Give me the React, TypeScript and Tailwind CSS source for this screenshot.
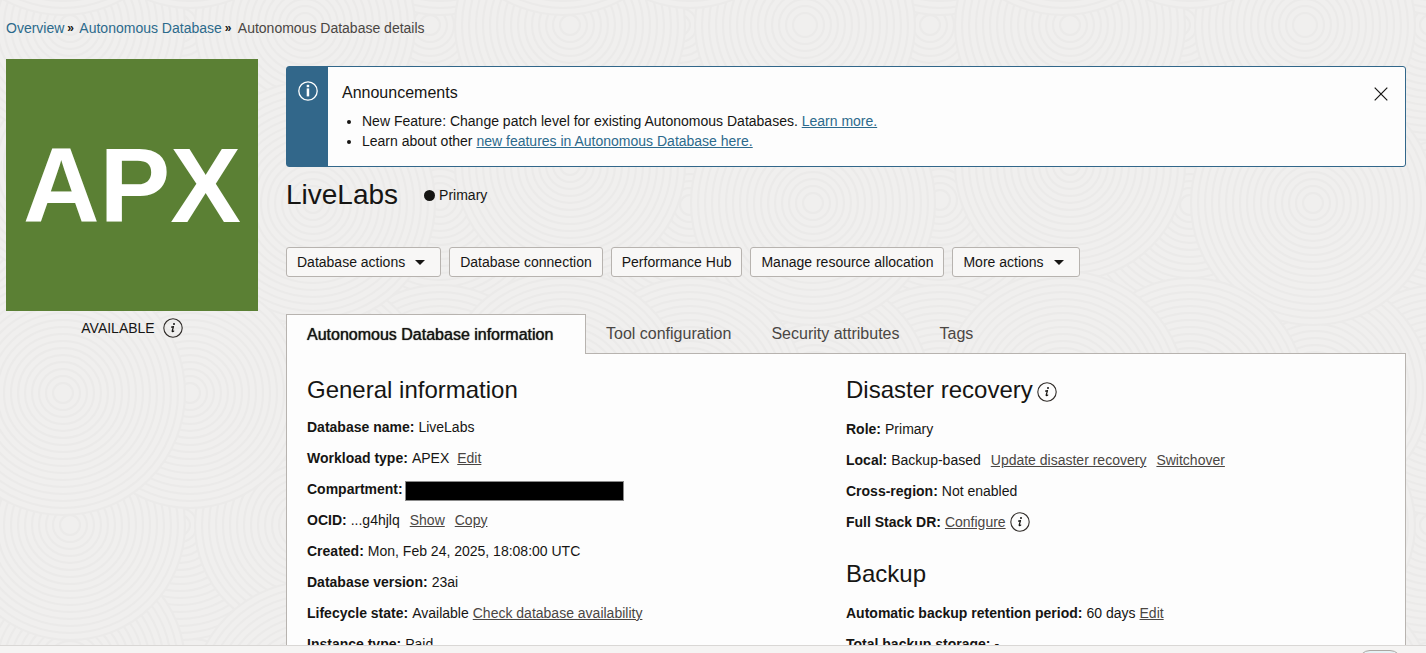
import type { ReactNode } from "react";

const TILE = 500;
const RING_SPACING = 7;

// Drawn in order, so later discs overlap earlier ones.
const RINGS: { x: number; y: number; r: number }[] = [
  { x: 190, y: 205, r: 115 },
  { x: 440, y: 200, r: 115 },
  { x: 430, y: 25, r: 115 },
  { x: 180, y: 25, r: 115 },
  { x: 440, y: 400, r: 115 },
  { x: 315, y: 390, r: 115 },
  { x: 70, y: 165, r: 115 },
  { x: 70, y: 25, r: 115 },
  { x: 305, y: 25, r: 110 },
  { x: 313, y: 203, r: 122 },
  { x: 190, y: 393, r: 115 },
  { x: 63, y: 393, r: 122 },
];

const WRAPS = [-TILE, 0, TILE];

function ringRadii(outer: number) {
  return Array.from({ length: Math.floor(outer / RING_SPACING) }, (_, i) => outer - i * RING_SPACING);
}

function RingTexture() {
  return (
    <svg className="absolute inset-0 h-full w-full" aria-hidden="true">
      <defs>
        <pattern id="rings" width={TILE} height={TILE} patternUnits="userSpaceOnUse">
          {RINGS.map(({ x, y, r }) =>
            WRAPS.flatMap((dx) =>
              WRAPS.map((dy) => (
                <g key={`${x}:${y}:${dx}:${dy}`} stroke="#ebeae9" strokeWidth="2" fill="none">
                  <circle cx={x + dx} cy={y + dy} r={r} fill="#f0efee" stroke="none" />
                  {ringRadii(r).map((radius) => (
                    <circle key={radius} cx={x + dx} cy={y + dy} r={radius} />
                  ))}
                </g>
              )),
            ),
          )}
        </pattern>
      </defs>
      <rect width="100%" height="100%" fill="url(#rings)" />
    </svg>
  );
}

function InfoIcon() {
  return (
    <svg className="h-5 w-5 shrink-0" viewBox="0 0 20 20" fill="none" aria-hidden="true">
      <circle cx="10" cy="10" r="9.2" stroke="#312d2a" strokeWidth="1.1" />
      <circle cx="11" cy="6.1" r="1" fill="#161513" />
      <path d="M8.1 9.2c1-.1 1.7-.3 2.4-.6L9.2 13c-.2.9.5 1 1.9-.4" stroke="#161513" strokeWidth="1.2" strokeLinejoin="round" />
    </svg>
  );
}

function InfoButton({ label }: { label: string }) {
  return (
    <button type="button" aria-label={label} className="flex h-5 w-5 items-center justify-center">
      <InfoIcon />
    </button>
  );
}

function ActionButton({ children, menu = false }: { children: ReactNode; menu?: boolean }) {
  return (
    <button
      type="button"
      className={`flex h-[30px] items-center gap-2.5 rounded-[3px] border border-[#b7b3af] bg-[#f8f7f6] pl-2.5 ${menu ? "pr-[15px]" : "pr-2.5"}`}
    >
      {children}
      {menu && (
        <svg className="h-[5px] w-2.5" viewBox="0 0 10 5" aria-hidden="true">
          <path d="M0 0h10L5 5z" fill="#161513" />
        </svg>
      )}
    </button>
  );
}

function TextLink({ children }: { children: ReactNode }) {
  return (
    <a href="#" className="text-[#4a4643] underline underline-offset-1">
      {children}
    </a>
  );
}

function Field({ label, children }: { label: string; children?: ReactNode }) {
  return (
    <div className="flex h-[31px] items-center gap-1 whitespace-nowrap">
      <dt className="font-bold">{label}:</dt>
      <dd className="flex items-center">{children}</dd>
    </div>
  );
}

export default function App() {
  return (
    <div className="flex h-screen flex-col overflow-hidden bg-[#f0efee] font-['Helvetica_Neue','Liberation_Sans',Arial,sans-serif] text-sm leading-5 text-[#161513]">
      <main className="relative min-h-0 flex-1 overflow-hidden">
        <RingTexture />
        <div className="relative pl-1.5 pr-5">
          <nav aria-label="Breadcrumb" className="flex items-center pt-[18px]">
            <a href="#" className="text-[#2c6a8c]">Overview</a>
            <span className="w-[15px] pl-[3px] text-xs font-bold">»</span>
            <a href="#" className="text-[#2c6a8c]">Autonomous Database</a>
            <span className="w-4 pl-[3px] text-xs font-bold">»</span>
            <span className="text-[#4a4643]">Autonomous Database details</span>
          </nav>

          <div className="flex gap-7 pt-[21px]">
            <aside className="w-[252px] shrink-0">
              <div className="flex h-[252px] items-center justify-center bg-[#5b8034] text-[106px] font-bold leading-none text-white">
                APX
              </div>
              <div className="flex items-center justify-center gap-2 pt-[7px]">
                AVAILABLE
                <InfoButton label="About the available state" />
              </div>
            </aside>

            <div className="min-w-0 flex-1 pt-[7px]">
              <section className="flex rounded-[3px] border border-[#32678a] bg-[#fdfdfd]">
                <div className="flex w-[41px] shrink-0 justify-center bg-[#32678a] pt-3.5">
                  <svg className="h-5 w-5" viewBox="0 0 20 20" fill="none" aria-hidden="true">
                    <circle cx="10" cy="10" r="9.2" stroke="#fff" strokeWidth="1.3" />
                    <rect x="8.7" y="3.8" width="2.5" height="2.4" fill="#fff" />
                    <path d="M8.7 7.4h2.5v8H8.7z" fill="#fff" />
                  </svg>
                </div>
                <div className="flex-1 pb-[15px] pl-3.5 pt-4">
                  <h2 className="text-base leading-5">Announcements</h2>
                  <ul className="list-disc pl-5 pt-2">
                    <li>
                      New Feature: Change patch level for existing Autonomous Databases.{" "}
                      <a href="#" className="text-[#2c6a8c] underline underline-offset-1">Learn more.</a>
                    </li>
                    <li>
                      Learn about other{" "}
                      <a href="#" className="text-[#2c6a8c] underline underline-offset-1">new features in Autonomous Database here.</a>
                    </li>
                  </ul>
                </div>
                <button type="button" aria-label="Close announcements" className="mr-4 mt-[19px] h-4 w-4">
                  <svg className="h-4 w-4" viewBox="0 0 16 16" aria-hidden="true">
                    <path d="m1.7 1.7 12.6 12.6M14.3 1.7 1.7 14.3" stroke="#161513" strokeWidth="1.2" />
                  </svg>
                </button>
              </section>

              <div className="flex h-14 items-center gap-[26px]">
                <h1 className="text-[28px] leading-9">LiveLabs</h1>
                <span className="flex items-center gap-1">
                  <span className="h-[11px] w-[11px] rounded-full bg-[#161513]" />
                  Primary
                </span>
              </div>

              <div className="flex gap-2 pt-6">
                <ActionButton menu>Database actions</ActionButton>
                <ActionButton>Database connection</ActionButton>
                <ActionButton>Performance Hub</ActionButton>
                <ActionButton>Manage resource allocation</ActionButton>
                <ActionButton menu>More actions</ActionButton>
              </div>

              <div role="tablist" className="relative z-10 flex pt-[37px] text-base leading-5 text-[#4a4643]">
                <button role="tab" aria-selected="true" type="button" className="-mb-px h-10 w-[300px] border border-b-0 border-[#b7b3af] bg-[#fdfdfd] pl-5 text-left text-[#161513] [text-shadow:0_0_1px_#161513]">
                  Autonomous Database information
                </button>
                <button role="tab" aria-selected="false" type="button" className="h-[39px] px-5">Tool configuration</button>
                <button role="tab" aria-selected="false" type="button" className="h-[39px] px-5">Security attributes</button>
                <button role="tab" aria-selected="false" type="button" className="h-[39px] px-5">Tags</button>
              </div>

              <div role="tabpanel" className="grid grid-cols-2 border border-[#b7b3af] bg-[#fdfdfd] px-5 pb-6 pt-5">
                <section>
                  <h2 className="text-2xl leading-8">General information</h2>
                  <dl className="pt-[5px]">
                    <Field label="Database name">LiveLabs</Field>
                    <Field label="Workload type">
                      <span className="mr-2">APEX</span>
                      <TextLink>Edit</TextLink>
                    </Field>
                    <div className="flex h-[31px] items-center">
                      <dt className="font-bold">Compartment:</dt>
                      <dd className="ml-0.5 mt-1 h-5 w-[219px] border border-[#8a8a8a] bg-black" />
                    </div>
                    <Field label="OCID">
                      <span className="mr-2.5">...g4hjlq</span>
                      <span className="flex gap-2.5">
                        <TextLink>Show</TextLink>
                        <TextLink>Copy</TextLink>
                      </span>
                    </Field>
                    <Field label="Created">Mon, Feb 24, 2025, 18:08:00 UTC</Field>
                    <Field label="Database version">23ai</Field>
                    <Field label="Lifecycle state">
                      <span className="mr-1">Available</span>
                      <TextLink>Check database availability</TextLink>
                    </Field>
                    <Field label="Instance type">Paid</Field>
                  </dl>
                </section>

                <div>
                  <section>
                    <div className="flex items-center gap-1">
                      <h2 className="text-2xl leading-8">Disaster recovery</h2>
                      <span className="pt-1">
                        <InfoButton label="About disaster recovery" />
                      </span>
                    </div>
                    <dl className="pt-[7px]">
                      <Field label="Role">Primary</Field>
                      <Field label="Local">
                        <span className="mr-2.5">Backup-based</span>
                        <span className="flex gap-2.5">
                          <TextLink>Update disaster recovery</TextLink>
                          <TextLink>Switchover</TextLink>
                        </span>
                      </Field>
                      <Field label="Cross-region">Not enabled</Field>
                      <Field label="Full Stack DR">
                        <span className="mr-1"><TextLink>Configure</TextLink></span>
                        <InfoButton label="About Full Stack DR" />
                      </Field>
                    </dl>
                  </section>
                  <section className="pt-[21px]">
                    <h2 className="text-2xl leading-8">Backup</h2>
                    <dl className="pt-[7px]">
                      <Field label="Automatic backup retention period">
                        <span className="mr-1">60 days</span>
                        <TextLink>Edit</TextLink>
                      </Field>
                      <Field label="Total backup storage">-</Field>
                    </dl>
                  </section>
                </div>
              </div>
            </div>
          </div>
        </div>
      </main>

      <footer className="flex h-2 shrink-0 justify-end overflow-hidden border-t border-[#d9d7d5] bg-[#f5f4f3] pr-6 pt-1">
        <button type="button" aria-label="Open help" className="h-11 w-11 shrink-0 rounded-[12px] border border-[#aaa6a2] bg-[#e6f2f5]" />
      </footer>
    </div>
  );
}
